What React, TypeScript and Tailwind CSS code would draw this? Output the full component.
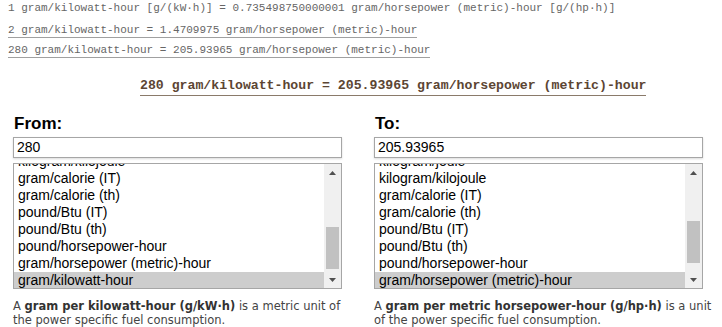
import React from "react";

const mono = { fontFamily: '"Liberation Mono", "DejaVu Sans Mono", monospace' };
const arial = { fontFamily: '"Liberation Sans", Arial, sans-serif' };
const verdana = { fontFamily: '"DejaVu Sans", Verdana, sans-serif' };

function UpArrow() {
  return (
    <svg width="7" height="4" viewBox="0 0 7 4">
      <polygon points="0,4 7,4 3.5,0" fill="#505050" />
    </svg>
  );
}
function DownArrow() {
  return (
    <svg width="7" height="4" viewBox="0 0 7 4">
      <polygon points="0,0 7,0 3.5,4" fill="#505050" />
    </svg>
  );
}

function ListBox({ items, thumbClass }: { items: string[]; thumbClass: string }) {
  return (
    <div className="mt-[5px] flex h-[126px] border border-[#a6a6a6] bg-white">
      <div className="flex-1 overflow-hidden">
        {items.map((it, i) => (
          <div
            key={i}
            className={
              (i === 0 ? "mt-[-11px] " : "") +
              (i === items.length - 1 ? "bg-[#cdcdcd] " : "") +
              "h-[17px] whitespace-nowrap pl-[4px] text-[14px] leading-[17px] text-black"
            }
            style={arial}
          >
            {it}
          </div>
        ))}
      </div>
      <div className="flex w-[17px] flex-col bg-[#f0f0f0]">
        <div className="flex h-[17px] items-center justify-center">
          <UpArrow />
        </div>
        <div className="flex-1">
          <div className={thumbClass + " ml-[2px] h-[42px] w-[13px] bg-[#c1c1c1]"} />
        </div>
        <div className="flex h-[17px] items-center justify-center">
          <DownArrow />
        </div>
      </div>
    </div>
  );
}

function Column({
  label,
  value,
  items,
  thumbClass,
  desc,
}: {
  label: string;
  value: string;
  items: string[];
  thumbClass: string;
  desc: React.ReactNode;
}) {
  return (
    <div className="w-[329px]">
      <div className="pl-[1px] text-[17px] font-bold leading-[20px] text-black" style={arial}>
        {label}
      </div>
      <div
        className="mt-[3px] h-[21px] border border-[#a6a6a6] bg-white pl-[3px] text-[14px] leading-[19px] text-black shadow-[0_1px_2px_rgba(0,0,0,0.15)]"
        style={arial}
      >
        {value}
      </div>
      <ListBox items={items} thumbClass={thumbClass} />
      <div className="mt-[10px] whitespace-nowrap text-[11.5px] leading-[14px] text-[#444]" style={verdana}>
        {desc}
      </div>
    </div>
  );
}

export default function App() {
  const leftItems = [
    "kilogram/kilojoule",
    "gram/calorie (IT)",
    "gram/calorie (th)",
    "pound/Btu (IT)",
    "pound/Btu (th)",
    "pound/horsepower-hour",
    "gram/horsepower (metric)-hour",
    "gram/kilowatt-hour",
  ];
  const rightItems = [
    "kilogram/joule",
    "kilogram/kilojoule",
    "gram/calorie (IT)",
    "gram/calorie (th)",
    "pound/Btu (IT)",
    "pound/Btu (th)",
    "pound/horsepower-hour",
    "gram/horsepower (metric)-hour",
  ];
  return (
    <div className="h-[327px] w-[722px] overflow-hidden bg-white">
      <div className="pl-[8px] text-[11px] text-[#666]" style={mono}>
        <div className="h-[16px] whitespace-nowrap leading-[16px]">
          1 gram/kilowatt-hour [g/(kW·h)] = 0.735498750000001 gram/horsepower (metric)-hour [g/(hp·h)]
        </div>
        <div className="mt-[6px] h-[15px]">
          <span className="inline-block whitespace-nowrap border-b border-[#a0a0a0] leading-[14px]">
            2 gram/kilowatt-hour = 1.4709975 gram/horsepower (metric)-hour
          </span>
        </div>
        <div className="mt-[5px] h-[15px]">
          <span className="inline-block whitespace-nowrap border-b border-[#a0a0a0] leading-[14px]">
            280 gram/kilowatt-hour = 205.93965 gram/horsepower (metric)-hour
          </span>
        </div>
      </div>
      <div className="mt-[16px] h-[22px] pl-[140px]" style={mono}>
        <span className="inline-block whitespace-nowrap border-b border-[#8a7a6a] text-[13.2px] font-bold leading-[18px] text-[#5c4533]">
          280 gram/kilowatt-hour = 205.93965 gram/horsepower (metric)-hour
        </span>
      </div>
      <div className="mt-[19px] flex gap-[32px] pl-[13px]">
        <Column
          label="From:"
          value="280"
          items={leftItems}
          thumbClass="mt-[46px]"
          desc={
            <>
              A <b className="text-[#333]">gram per kilowatt-hour (g/kW·h)</b> is a metric unit of
              <br />
              the power specific fuel consumption.
            </>
          }
        />
        <Column
          label="To:"
          value="205.93965"
          items={rightItems}
          thumbClass="mt-[40px]"
          desc={
            <>
              A <b className="text-[#333]">gram per metric horsepower-hour (g/hp·h)</b> is a unit
              <br />
              of the power specific fuel consumption.
            </>
          }
        />
      </div>
    </div>
  );
}
